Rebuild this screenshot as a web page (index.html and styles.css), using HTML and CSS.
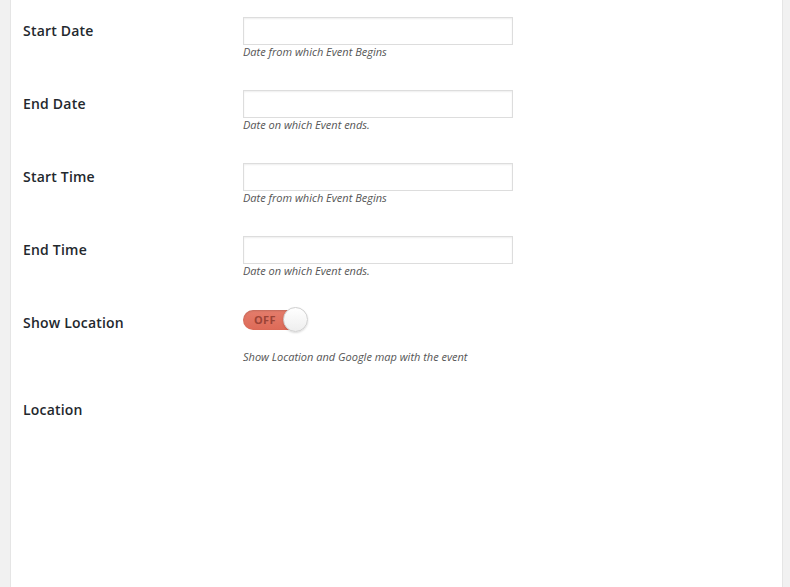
FILE: index.html
```html
<!DOCTYPE html>
<html>
<head>
<meta charset="utf-8">
<link rel="stylesheet" href="styles.css">
</head>
<body>
<div class="panel">
  <div class="row">
    <div class="label">Start Date</div>
    <div class="field">
      <input class="text" type="text">
      <p class="desc">Date from which Event Begins</p>
    </div>
  </div>
  <div class="row">
    <div class="label">End Date</div>
    <div class="field">
      <input class="text" type="text">
      <p class="desc">Date on which Event ends.</p>
    </div>
  </div>
  <div class="row">
    <div class="label">Start Time</div>
    <div class="field">
      <input class="text" type="text">
      <p class="desc">Date from which Event Begins</p>
    </div>
  </div>
  <div class="row">
    <div class="label">End Time</div>
    <div class="field">
      <input class="text" type="text">
      <p class="desc">Date on which Event ends.</p>
    </div>
  </div>
  <div class="row row-tall">
    <div class="label">Show Location</div>
    <div class="field">
      <div class="toggle"><span class="off">OFF</span><span class="knob"></span></div>
      <p class="desc desc-toggle">Show Location and Google map with the event</p>
    </div>
  </div>
  <div class="row">
    <div class="label">Location</div>
    <div class="field"></div>
  </div>
</div>
</body>
</html>
```
FILE: styles.css
```css
html, body {
  margin: 0;
  padding: 0;
  height: 100%;
}
body {
  background: #f1f1f1;
  font-family: "Open Sans", "Liberation Sans", sans-serif;
  overflow: hidden;
}
.panel {
  margin-left: 10px;
  width: 771px;
  height: 587px;
  box-sizing: content-box;
  background: #fff;
  border-left: 1px solid #e5e5e5;
  border-right: 1px solid #e5e5e5;
  padding-top: 17px;
}
.row {
  display: flex;
  height: 73px;
}
.row-tall {
  height: 87px;
}
.label {
  width: 220px;
  padding-left: 12px;
  padding-top: 4px;
  font-size: 14px;
  line-height: 20px;
  font-weight: 600;
  letter-spacing: 0.2px;
  color: #23282d;
}
.field {
  display: flex;
  flex-direction: column;
}
.text {
  box-sizing: border-box;
  width: 270px;
  height: 28px;
  margin: 0;
  border: 1px solid #dddddd;
  box-shadow: inset 0 1px 2px rgba(0,0,0,0.07);
  background: #fff;
}
.desc {
  margin: -1px 0 0;
  font-size: 11px;
  line-height: 15px;
  font-style: italic;
  color: #555;
}
.toggle {
  position: relative;
  width: 64px;
  height: 25px;
  margin-top: -2px;
}
.off {
  position: absolute;
  left: 0;
  top: 3px;
  width: 58px;
  height: 20px;
  border-radius: 10px;
  background: linear-gradient(#e47d6c, #dd6a57);
  box-shadow: inset 0 1px 2px rgba(0,0,0,0.15);
  color: #9b4336;
  font-size: 11px;
  font-weight: 700;
  line-height: 20px;
  padding-left: 11px;
  box-sizing: border-box;
  letter-spacing: 0.3px;
}
.knob {
  position: absolute;
  left: 40px;
  top: 0;
  width: 23px;
  height: 23px;
  border-radius: 50%;
  background: linear-gradient(#ffffff, #eeeeee);
  border: 1px solid #cfcfcf;
  box-sizing: content-box;
  box-shadow: 0 1px 2px rgba(0,0,0,0.15);
}
.desc-toggle {
  margin-top: 17px;
}
```
